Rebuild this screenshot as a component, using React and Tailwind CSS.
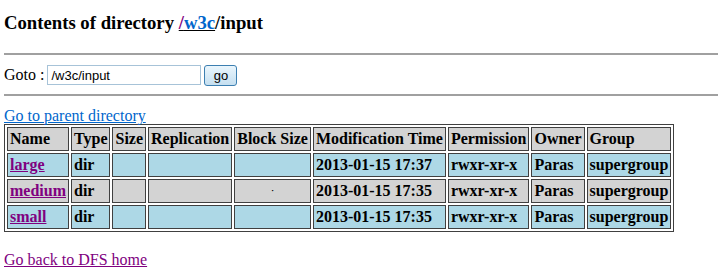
const rows = [
  { name: 'large', bg: 'bg-[#add8e6]', time: '2013-01-15 17:37', dot: false },
  { name: 'medium', bg: 'bg-[#d3d3d3]', time: '2013-01-15 17:35', dot: true },
  { name: 'small', bg: 'bg-[#add8e6]', time: '2013-01-15 17:35', dot: false },
];

const headers = ['Name', 'Type', 'Size', 'Replication', 'Block Size', 'Modification Time', 'Permission', 'Owner', 'Group'];

const cell = 'border border-[#404040] px-[2px] py-0 h-[24px] leading-[20px] font-bold whitespace-nowrap';

export default function App() {
  return (
    <div className="font-['Liberation_Serif',serif] text-[16px] text-black bg-white px-[4px] pt-[12px] pb-[4px]">
      <h3 className="text-[18.72px] font-bold leading-[21px]">
        Contents of directory{' '}
        <a href="#" className="underline"><span className="text-[#800080]">/</span><span className="text-[#0066cc]">w3c</span></a>/input
      </h3>
      <hr className="mt-[20px] border-0 border-t-2 border-[#a0a0a0]" />
      <div className="flex items-center h-[22px] mt-[9px] leading-[18px]">
        <span>Goto :&nbsp;</span>
        <input
          readOnly
          value="/w3c/input"
          className="-ml-[1px] w-[154px] h-[20px] border border-[#a7c3d8] px-[3px] font-['Liberation_Sans',sans-serif] text-[13px] outline-none"
        />
        <button className="ml-[3px] w-[33px] h-[21px] rounded-[3px] border border-[#3c7fb1] bg-gradient-to-b from-[#eaf6fd] to-[#c5dff0] font-['Liberation_Sans',sans-serif] text-[13px] leading-none">
          go
        </button>
      </div>
      <hr className="mt-[8px] border-0 border-t-2 border-[#a0a0a0]" />
      <a href="#" className="block mt-[11px] leading-[18px] text-[#0066cc] underline">Go to parent directory</a>
      <table className="border border-[#404040] border-separate border-spacing-[2px] -mt-[1px]">
        <thead>
          <tr>
            {headers.map((h) => (
              <th key={h} className={`${cell} text-left bg-[#d3d3d3]`}>{h}</th>
            ))}
          </tr>
        </thead>
        <tbody>
          {rows.map((r) => (
            <tr key={r.name}>
              <td className={`${cell} ${r.bg}`}>
                <a href="#" className="text-[#800080] underline">{r.name}</a>
              </td>
              <td className={`${cell} ${r.bg}`}>dir</td>
              <td className={`${cell} ${r.bg}`}></td>
              <td className={`${cell} ${r.bg}`}></td>
              <td className={`${cell} ${r.bg} text-center`}>
                {r.dot ? <span className="text-[8px] align-middle">·</span> : null}
              </td>
              <td className={`${cell} ${r.bg}`}>{r.time}</td>
              <td className={`${cell} ${r.bg}`}>rwxr-xr-x</td>
              <td className={`${cell} ${r.bg}`}>Paras</td>
              <td className={`${cell} ${r.bg}`}>supergroup</td>
            </tr>
          ))}
        </tbody>
      </table>
      <a href="#" className="block mt-[19px] leading-[18px] text-[#800080] underline">Go back to DFS home</a>
    </div>
  );
}
